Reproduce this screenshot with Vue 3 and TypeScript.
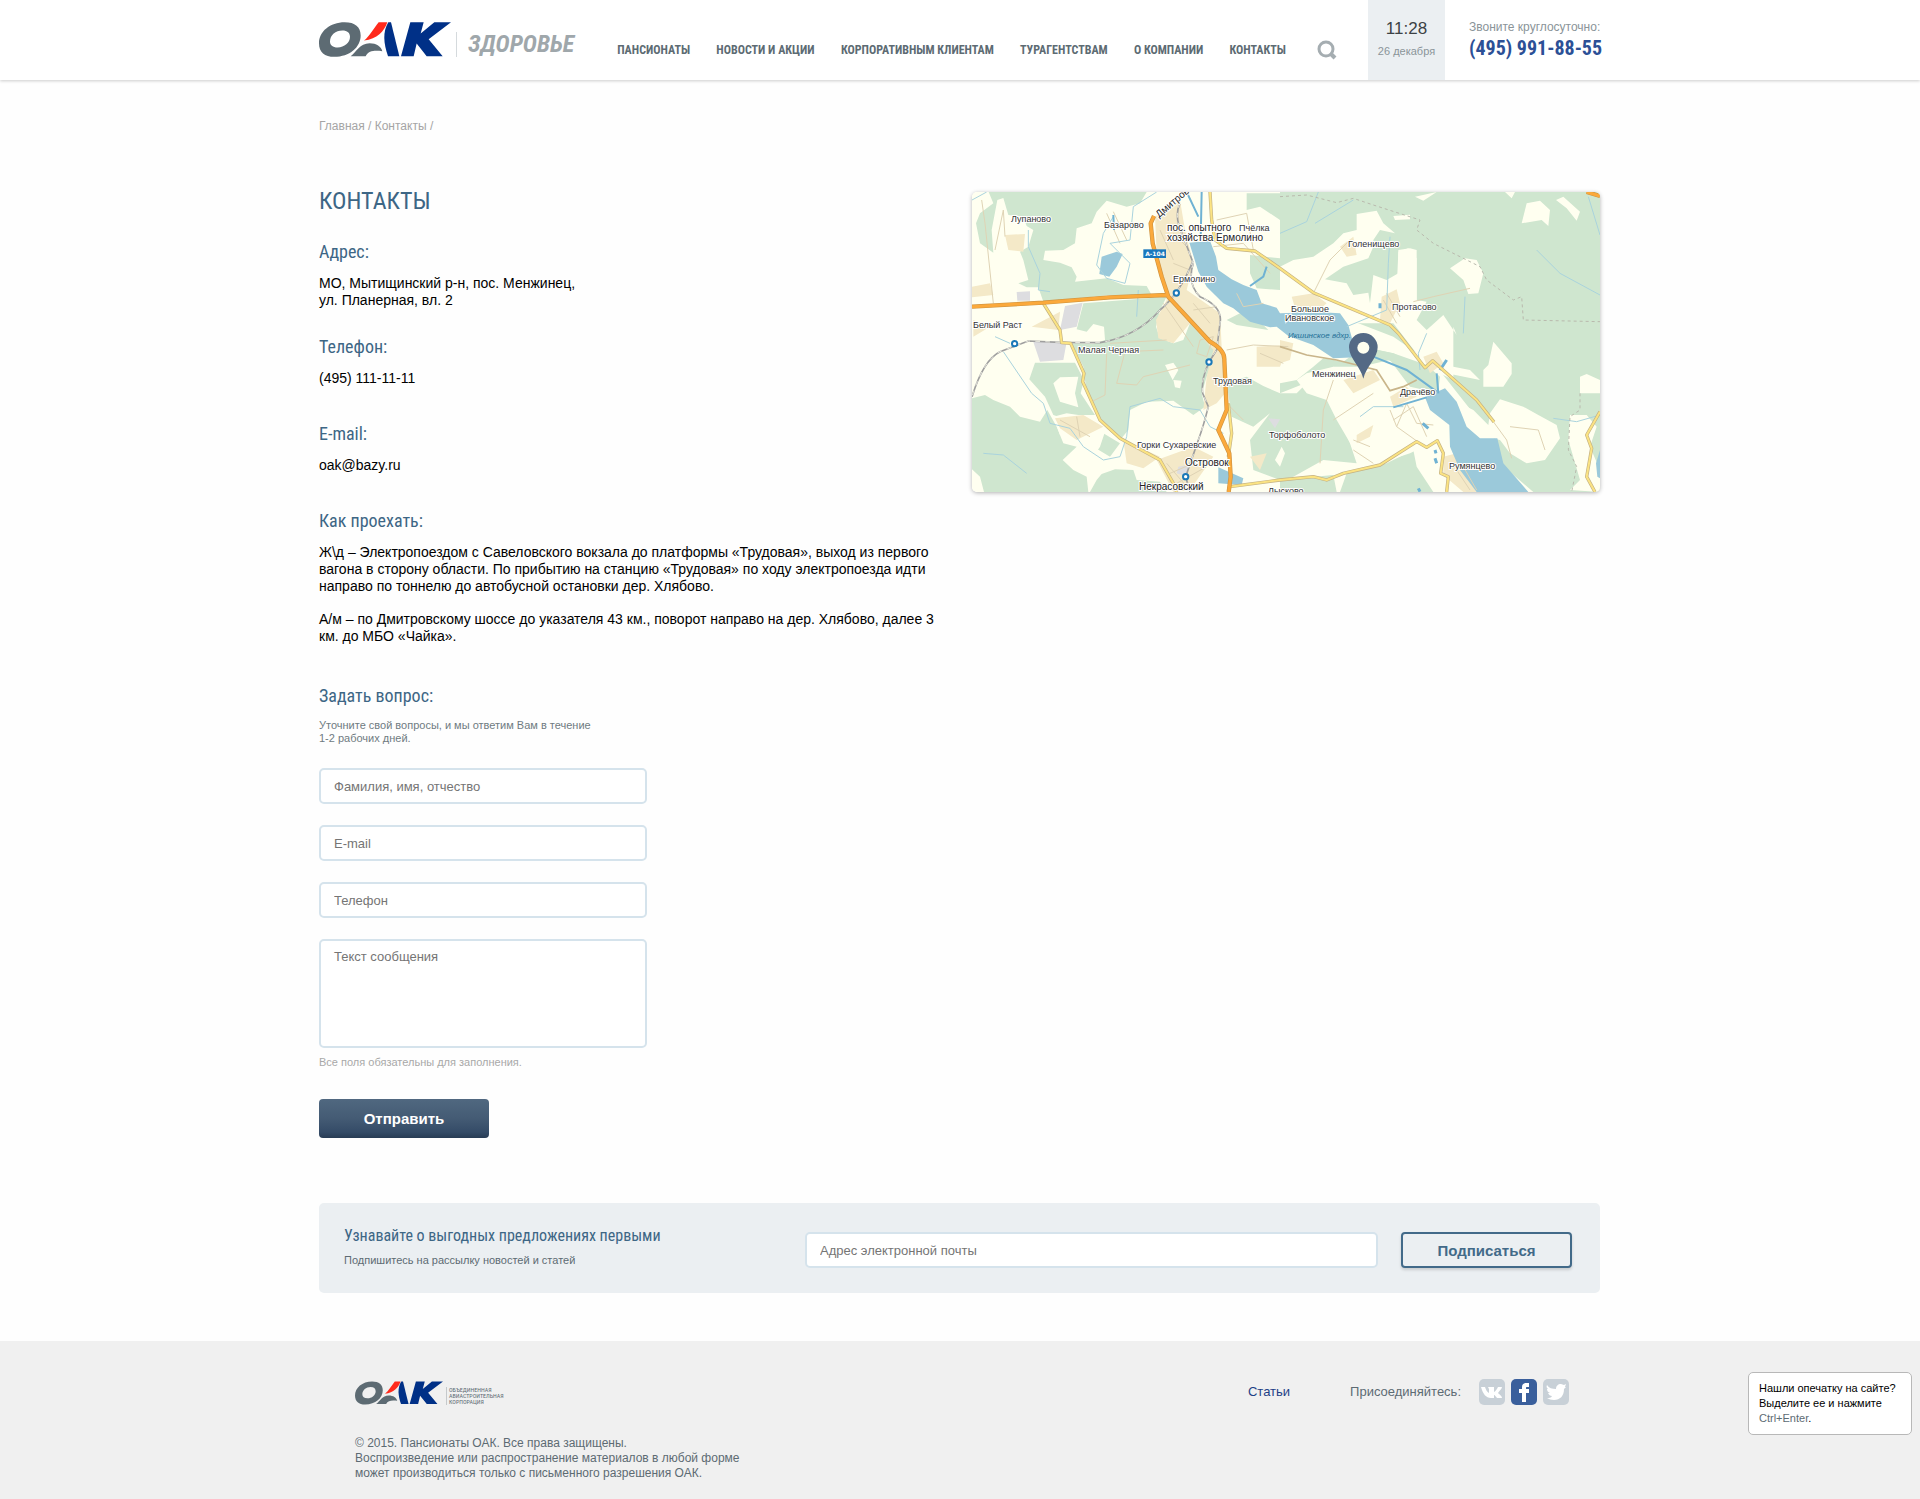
<script setup lang="ts">
import { ref } from 'vue'

interface MapLabel {
  text: string
  x: number
  y: number
  big?: boolean
}

const menu: string[] = [
  'Пансионаты',
  'Новости и акции',
  'Корпоративным клиентам',
  'Турагентствам',
  'О компании',
  'Контакты',
]

const labels: MapLabel[] = [
  { text: 'Лупаново', x: 39, y: 30 },
  { text: 'Базарово', x: 132, y: 36 },
  { text: 'пос. опытного', x: 195, y: 39, big: true },
  { text: 'хозяйства Ермолино', x: 195, y: 49, big: true },
  { text: 'Пчёлка', x: 267, y: 39 },
  { text: 'Ермолино', x: 201, y: 90 },
  { text: 'Белый Раст', x: 1, y: 136 },
  { text: 'Малая Черная', x: 106, y: 161 },
  { text: 'Трудовая', x: 241, y: 192 },
  { text: 'Горки Сухаревские', x: 165, y: 256 },
  { text: 'Островок', x: 213, y: 274, big: true },
  { text: 'Некрасовский', x: 167, y: 298, big: true },
  { text: 'Лысково', x: 296, y: 302 },
  { text: 'Торфоболото', x: 297, y: 246 },
  { text: 'Голенищево', x: 376, y: 55 },
  { text: 'Протасово', x: 420, y: 118 },
  { text: 'Большое', x: 319, y: 120 },
  { text: 'Ивановское', x: 313, y: 129 },
  { text: 'Менжинец', x: 340, y: 185 },
  { text: 'Драчёво', x: 428, y: 203 },
  { text: 'Румянцево', x: 477, y: 277 },
]

const stations: [number, number][] = [
  [649, 339],
  [164, 491],
  [747, 546],
  [677, 890],
]

const fullName = ref('')
const email = ref('')
const phone = ref('')
const message = ref('')
const subscription = ref('')
</script>

<template>
  <div class="page">
    <svg class="defs" width="0" height="0" aria-hidden="true">
      <symbol id="oak" viewBox="57 66 396 104">
        <path class="oak-grey" fill-rule="evenodd" d="M57 129C57 94 90 66 134 66c31 0 48 14 48 40 0 35-33 64-79 64-29 0-46-14-46-41zM90 124c0 11 8 18 23 18 20 0 37-14 37-32 0-12-8-19-23-19-20 0-37 14-37 33z" />
        <path class="oak-grey" d="M152 168c17-13 27-39 57-39 20 0 35 10 38 24-22-2-41-3-50 15z" />
        <path class="oak-red" d="M236 66h26c-10 28-30 50-70 55 16-12 30-38 44-55z" />
        <path class="oak-blue" d="M265 66h8l25 102h-34c-13-38-17-72 1-102z" />
        <path class="oak-blue" d="M331 66h40l-9 34 41-34h50l-67 51 42 51h-48l-30-38-9 38h-38z" />
      </symbol>
    </svg>

    <header class="header">
      <div class="container header-row">
        <a class="brand" href="#">
          <svg class="brand-logo" role="img" aria-label="ОАК"><use href="#oak" /></svg>
          <span class="brand-name">ЗДОРОВЬЕ</span>
        </a>
        <nav class="menu">
          <a v-for="item in menu" :key="item" href="#">{{ item }}</a>
        </nav>
        <button class="search" type="button" aria-label="Поиск">
          <svg width="20" height="20" viewBox="0 0 20 20" fill="none" stroke="#a5adb1">
            <circle cx="9" cy="9" r="7" stroke-width="3" />
            <path d="M14 14l4 4" stroke-width="4" />
          </svg>
        </button>
        <div class="clock">
          <span class="clock-time">11:28</span>
          <span class="clock-date">26 декабря</span>
        </div>
        <div class="call">
          <span class="call-note">Звоните круглосуточно:</span>
          <a class="call-number" href="tel:+74959918855">(495) 991-88-55</a>
        </div>
      </div>
    </header>

    <main class="container">
      <nav class="crumbs"><a href="#">Главная</a> / <a href="#">Контакты</a> /</nav>

      <div class="columns">
        <div class="info">
          <h1>КОНТАКТЫ</h1>
          <section class="address">
            <h2>Адрес:</h2>
            <p>МО, Мытищинский р-н, пос. Менжинец,<br />ул. Планерная, вл. 2</p>
          </section>
          <section>
            <h2>Телефон:</h2>
            <p>(495) 111-11-11</p>
          </section>
          <section>
            <h2>E-mail:</h2>
            <p>oak@bazy.ru</p>
          </section>
          <section class="route">
            <h2>Как проехать:</h2>
            <p>Ж\д – Электропоездом с Савеловского вокзала до платформы «Трудовая», выход из первого вагона в сторону области. По прибытию на станцию «Трудовая» по ходу электропоезда идти направо по тоннелю до автобусной остановки дер. Хлябово.</p>
            <p>А/м – по Дмитровскому шоссе до указателя 43 км., поворот направо на дер. Хлябово, далее 3 км. до МБО «Чайка».</p>
          </section>

          <form class="ask" @submit.prevent>
            <h2>Задать вопрос:</h2>
            <p class="ask-note">Уточните свой вопросы, и мы ответим Вам в течение<br />1-2 рабочих дней.</p>
            <input v-model="fullName" class="field" type="text" aria-label="Фамилия, имя, отчество" placeholder="Фамилия, имя, отчество" />
            <input v-model="email" class="field" type="email" aria-label="E-mail" placeholder="E-mail" />
            <input v-model="phone" class="field" type="tel" aria-label="Телефон" placeholder="Телефон" />
            <textarea v-model="message" class="field area" aria-label="Текст сообщения" placeholder="Текст сообщения"></textarea>
            <p class="required">Все поля обязательны для заполнения.</p>
            <button class="send" type="submit">Отправить</button>
          </form>
        </div>

        <svg class="map" viewBox="0 0 628 300" role="img" aria-label="Карта проезда">
          <svg width="628" height="300" viewBox="36 36 1884 900" preserveAspectRatio="none">
            <rect x="36" y="36" width="1884" height="900" fill="#fffff0" />
            <g fill="#cfe6cf">
              <path d="M86 36H560L540 70 500 80 440 62 410 95 395 130 350 145 345 190 310 210 255 212 250 240 300 248 335 262 350 290 345 305 440 295 490 315 560 318 575 345 450 345 250 365 235 322 200 322 175 310 205 300 190 240 180 215 205 200 220 150 200 138 190 110 145 105 130 54 112 60 95 150 100 218 60 190 48 130 60 100 100 70z" />
              <path d="M370 370L620 350 600 390 588 440 600 475 640 490 670 480 690 430 740 480 770 510 740 590 725 640 735 680 700 705 640 662 560 665 510 690 505 750 480 780 430 735 380 640 370 560 335 490 400 492 435 480 432 440 400 432 380 455 350 448z" />
              <path fill-rule="evenodd" d="M225 548H345L372 600 362 640 405 705 340 705 325 720 280 705 255 650 208 598zM280 610L300 592 355 590 345 640 355 682 300 665z" />
              <path d="M36 655L75 645 100 660 150 680 180 710 240 725 262 690 290 740 310 790 350 800 308 840 340 870 380 890 385 936H72L60 890 36 868z" />
              <path d="M425 882L465 868 520 870 530 900 600 905 620 936H390L410 900zM390 770L430 760 480 790 450 830 400 800z" />
              <path d="M800 610L860 590 910 618 960 640 1010 640 1040 610 1090 640 1110 660 1135 690 1140 720 1170 790 1190 850 1090 840 1000 890 960 900 880 870 870 780 930 700 880 740 815 710z" />
              <path d="M860 40H960V120L900 80 860 90zM870 225L960 235V330L890 325 870 280zM840 400L900 425 925 450 830 435 800 420z" />
              <path d="M960 36H1920V936H1720L1620 850 1600 770 1540 700 1430 560 1300 470 1170 420 1090 370 960 270z" />
              <path d="M960 610L1010 600 1060 560 1090 535 1150 545 1210 500 1300 520 1400 570 1440 640 1350 620 1290 540 1200 560 1120 560 1060 600 960 640zM1240 700L1270 690 1270 770 1240 760zM960 900L1120 885 1130 936H960zM1160 880L1280 850 1360 810 1370 860 1420 936H1140z" />
            </g>
            <g fill="#fffff0">
              <path d="M960 260L1000 240 1060 230 1120 190 1150 160 1190 150 1190 102 1250 92 1270 130 1305 160 1260 150 1240 180 1240 200 1225 235 1150 260 1095 298 1160 310 1180 345 1225 338 1230 370 1240 285 1280 300 1315 280 1315 210 1350 205 1370 210 1370 360 1400 365 1370 420 1400 450 1450 405 1490 465 1480 440 1480 600 1400 560 1300 430 1060 430 960 400z" />
              <path d="M1315 215L1345 205 1370 235 1370 360 1340 385 1310 330zM1470 265L1515 235 1550 240 1570 280 1555 340 1525 342 1510 300zM1685 130L1700 70 1740 62 1770 90 1765 138 1745 120zM1788 60L1810 50 1860 95 1850 122 1820 85zM1365 50L1430 36 1390 62zM1300 108L1350 104 1350 118 1305 120zM1635 36H1665L1655 55zM1600 485L1655 550 1655 582 1630 620 1570 620 1570 570 1585 555zM1860 590L1880 582 1920 600V640L1860 640zM1830 705L1880 705 1910 740 1890 800 1920 870V936L1830 930 1860 900 1825 780z" />
              <path d="M1590 700L1620 658 1690 680 1735 705 1790 735 1800 775 1755 840 1700 850 1650 820 1620 780 1580 770zM1460 650L1540 690 1590 740 1600 780 1540 770zM1560 600L1460 580 1440 540 1480 560 1530 570z" />
              <path d="M1010 600L1040 580 1120 560 1160 580 1170 620 1250 640 1300 600 1400 660 1440 700 1440 850 1390 800 1350 820 1260 850 1200 840 1130 720 1100 660 1040 640z" />
              <path d="M615 555L640 548 655 570 638 600zM640 600L665 602 660 625 645 622zM965 800L975 820 960 860 945 840zM280 710L320 700 400 712 440 740 420 800 400 830 360 760 300 765z" />
            </g>
            <path fill="#cfe6cf" d="M1200 500L1300 520 1400 555 1440 590 1435 630 1350 570 1240 520z" />
            <g fill="#f4e9c8">
              <path d="M585 110L660 60 675 150 700 250 680 330 780 400 785 500 795 640 770 670 730 690 740 590 760 510 690 430 640 490 595 475 588 420 620 360 590 220z" />
              <path d="M135 165L195 162 190 215 145 210zM36 320L90 310 100 345 36 352zM215 440L300 395 295 450zM40 420L90 440 40 470zM490 780L600 830 550 865 500 850zM590 840L700 800 760 830 690 930 640 936zM820 340L870 330 865 385 830 380zM890 500L985 495 960 560 890 560zM995 350L1060 340 1100 370 1070 395 1010 400zM1265 350L1310 328 1320 370 1290 430 1260 420zM1140 200L1180 170 1190 225 1160 230zM1150 600L1240 570 1260 600 1180 640zM1290 650L1340 620 1370 650 1300 680zM960 480L1000 490 990 540 960 550zM1190 765L1240 735 1230 770 1190 790zM1450 830L1490 820 1530 890 1560 936H1510L1450 885zM1390 530L1430 515 1450 550 1410 580zM870 830L920 820 900 870zM285 715L370 705 430 740 350 780 300 745z" />
            </g>
            <path fill="#dddde0" d="M170 336L210 334 210 362 172 362zM315 378L368 368 350 440 300 450zM220 486L320 486 310 540 240 545zM655 860L685 855 680 890 650 880zM925 715L960 718 945 745z" />
            <g fill="#9bc9da">
              <path d="M688 188L750 182 768 230 775 270 815 298 850 315 890 330 905 370 950 383 960 400 1070 396 1140 400 1165 435 1180 490 1240 510 1190 532 1120 535 1060 495 985 468 950 440 930 442 870 425 820 385 790 370 740 320 715 275z" />
              <path d="M425 230L470 215 488 222 470 260 448 290 418 282zM1395 652L1455 625 1490 665 1520 740 1560 775 1612 775 1630 850 1705 936H1550L1500 870 1470 800 1468 735 1410 690zM775 862L850 895 845 915 775 910zM1920 810L1908 850 1912 890 1920 895z" />
            </g>
            <g fill="none" stroke="#dfd3b4" stroke-width="3">
              <path d="M65 60L75 130 100 370M105 210L130 90 135 170M440 520L435 645 395 665M450 490L620 480M610 510L495 515 470 610 530 615 550 590 690 555M800 510L880 495 985 500M1060 340L1110 240 1170 180M1360 365L1420 350 1530 325M1120 600L1090 690 1080 850M1600 725L1640 780 1655 835M1650 740L1735 750 1755 810M1240 640L1120 720M1310 740L1340 670 1370 730 1420 735M1290 690L1310 740 1380 790M1300 720L1360 680 1400 770M640 160L680 200M640 250L690 270M700 370L750 430M760 200L850 190 930 280M770 120L860 100 880 210M830 340L850 380 910 370M900 520L970 550M720 480L760 470 740 530 710 520zM1490 870L1530 930M1510 860L1550 930M610 370L700 500M800 670L850 720M700 390L770 380M600 150L640 240M1180 780L1230 800M1180 810L1240 850" />
              <path d="M440 100L480 190M460 95L500 180M1270 360L1310 430M1280 340L1320 410M620 850L680 920M630 880L700 850M650 910L740 860M300 720L390 770M350 710L360 770" />
            </g>
            <g fill="none" stroke="#a9d3dd" stroke-width="3">
              <path d="M36 60L80 36M205 150L205 200 240 280 235 330 270 335M590 36L520 80 510 180 450 190 510 250 495 310 440 295 410 255 430 160 460 110M130 515L215 640 250 670 270 730 330 745 370 800 430 840 480 830 500 770 510 680 600 655 640 680 720 690 750 740 790 760M70 820L130 825 200 880M960 160L1040 125 1075 36M1065 130L1180 60M1290 170L1285 250 1280 390 1160 440M1730 210L1800 280 1920 345M1515 350L1510 460M1885 50L1920 165M1400 460L1375 520 1380 570M1780 715L1850 725 1920 705M1200 710L1240 680 1330 680M530 410L535 330M105 470L150 490" />
            </g>
            <g fill="none" stroke="#6fb2d3" stroke-width="6">
              <path d="M680 36L715 110M725 36L722 180M1180 520L1240 530 1340 570 1430 635M1300 682L1400 652M1430 580L1435 640M920 260L910 290 870 318M460 105L462 150" />
              <path d="M1388 730L1405 745M1440 570L1460 540M1425 810L1428 820M1425 835L1430 850M1375 925L1380 935M1260 370V385" stroke-width="9" />
            </g>
            <path d="M960 50L1040 45 1130 68 1180 55 1240 75 1380 120 1370 150 1420 190 1560 260 1580 300 1660 360 1685 350 1690 420 1920 425M1860 640L1860 690 1830 710 1825 810 1850 860 1835 936" fill="none" stroke="#b9b9ad" stroke-width="3" stroke-dasharray="9 9" />
            <g fill="none" stroke="#9f9f9f" stroke-width="5">
              <path d="M660 70Q640 110 670 170L698 245Q660 340 600 390 530 470 420 488L300 487 205 483 120 515Q70 540 36 650M700 250Q680 310 720 350 790 380 780 430L770 510Q720 580 728 640L745 680Q730 740 715 780L677 890 690 936" />
              <path d="M660 70Q640 110 670 170L698 245Q660 340 600 390 530 470 420 488L300 487 205 483 120 515Q70 540 36 650M700 250Q680 310 720 350 790 380 780 430L770 510Q720 580 728 640L745 680Q730 740 715 780L677 890 690 936" stroke="#e9e9e0" stroke-width="3" stroke-dasharray="14 16" />
            </g>
            <path d="M960 500L1040 525 1130 540 1250 570 1290 632 1330 620 1370 600" fill="none" stroke="#c9b58a" stroke-width="5" />
            <g fill="none" stroke-linejoin="round">
              <g v-for="layer in 2" :key="layer" :stroke="layer === 1 ? '#c4b283' : '#fbe382'" :stroke-width="layer === 1 ? 10 : 6">
                <path d="M250 370L300 450 305 488 332 490 372 580 368 605 420 720 480 775 600 840 640 910 650 936M750 36L755 120 765 180 800 205 885 213 960 265 1060 338 1290 435 1315 460 1395 563 1418 542 1550 660 1602 726M805 670L815 760 805 830M810 920L960 900 1060 890 1100 900 1150 880 1260 855 1370 785 1400 802 1432 782 1450 820 1442 880 1465 890 1460 936M1920 695L1880 765 1895 805 1880 890 1905 936" />
              </g>
              <g v-for="layer in 2" :key="layer + 2" :stroke="layer === 1 ? '#cf9440' : '#fba93b'" :stroke-width="layer === 1 ? 13 : 9">
                <path d="M36 380L250 368 450 352 622 345M582 108L572 130 578 190 605 290 625 350 750 485Q795 510 793 540L800 690 775 750 808 820 812 890 806 936M1880 36L1920 48" />
              </g>
            </g>
            <rect x="550" y="208" width="68" height="26" fill="#1a78bd" />
            <g fill="#fff" stroke="#1a78b8" stroke-width="6">
              <circle v-for="s in stations" :key="s[0]" :cx="s[0]" :cy="s[1]" r="8" />
            </g>
            <path fill="#546985" d="M1210 596C1202 560 1167 535 1167 502a43 43 0 0 1 86 0C1253 535 1218 560 1210 596z" />
            <circle cx="1210" cy="503" r="18" fill="#fffff0" />
          </svg>
          <g class="map-labels">
            <text v-for="l in labels" :key="l.text" :x="l.x" :y="l.y" :class="{ big: l.big }">{{ l.text }}</text>
            <text class="big" x="187" y="26" transform="rotate(-40 187 26)">Дмитров</text>
          </g>
          <text class="map-water" x="316" y="146">Икшинское вдхр.</text>
          <text class="map-road" x="183" y="64" text-anchor="middle">А-104</text>
        </svg>
      </div>

      <form class="subscribe" @submit.prevent>
        <div class="subscribe-text">
          <h3>Узнавайте о выгодных предложениях первыми</h3>
          <p>Подпишитесь на рассылку новостей и статей</p>
        </div>
        <input v-model="subscription" class="field" type="email" aria-label="Адрес электронной почты" placeholder="Адрес электронной почты" />
        <button type="submit">Подписаться</button>
      </form>
    </main>

    <footer class="footer">
      <div class="footer-inner">
        <div class="footer-left">
          <a class="footer-brand" href="#">
            <svg class="footer-logo" role="img" aria-label="ОАК"><use href="#oak" /></svg>
            <span>ОБЪЕДИНЕННАЯ<br />АВИАСТРОИТЕЛЬНАЯ<br />КОРПОРАЦИЯ</span>
          </a>
          <p>© 2015. Пансионаты ОАК. Все права защищены.<br />Воспроизведение или распространение материалов в любой форме<br />может производиться только с письменного разрешения ОАК.</p>
        </div>
        <div class="footer-right">
          <a class="articles" href="#">Статьи</a>
          <span class="join">Присоединяйтесь:</span>
          <a class="social vk" href="#" aria-label="ВКонтакте">
            <svg viewBox="0 0 26 26" fill="#fff"><path d="M2 8h4c1 3 2 5 4 6V10L9 8h6v5c1 0 3-3 4-5h4c0 2-3 4-4 6 1 1 4 3 4 5h-5c-1-1-2-3-3-3v3h-3C7 19 4 15 2 8z" /></svg>
          </a>
          <a class="social fb" href="#" aria-label="Facebook">
            <svg viewBox="0 0 26 26" fill="#fff"><path d="M11 23v-9H8v-4h3V8c0-3 2-4 4-4h3v4h-2c-1 0-1 0-1 2h3v4h-3v9z" /></svg>
          </a>
          <a class="social tw" href="#" aria-label="Twitter">
            <svg viewBox="0 0 26 26" fill="#fff"><path d="M4 6c2 3 5 4 9 4 0-3 2-5 5-5 1 0 2 1 3 1l2-1-1 3 1 0-2 2c0 7-4 11-10 11-3 0-5-1-7-2 2 0 4 0 5-2-2 0-3-1-4-3h2c-2-1-3-2-3-4h1C4 9 3 8 4 6z" /></svg>
          </a>
        </div>
      </div>
      <aside class="typo">Нашли опечатку на сайте? Выделите ее и нажмите <span>Ctrl+Enter</span>.</aside>
    </footer>
  </div>
</template>

<style>
body {
  background: #fefefe;
}
</style>

<style scoped>
* {
  box-sizing: border-box;
}
.page {
  --narrow: "Liberation Sans Narrow", "Arial Narrow", "Roboto Condensed", "Liberation Sans", sans-serif;
  font: 14px/17px "Liberation Sans", Arial, sans-serif;
  color: #000;
}
.page a {
  color: inherit;
  text-decoration: none;
}
h1, h2, h3, p {
  margin: 0;
}
button, input, textarea {
  font-family: inherit;
  margin: 0;
}
.defs {
  position: absolute;
}
.oak-grey { fill: #5d6b73; }
.oak-red { fill: #ff2a1c; }
.oak-blue { fill: #003087; }
.container {
  max-width: 1282px;
  margin: 0 auto;
  padding-right: 1px;
}
.header {
  background: #fff;
  box-shadow: 0 1px 3px rgba(0, 0, 0, 0.2);
}
.header-row {
  display: flex;
  height: 80px;
}
.brand {
  display: flex;
  align-items: flex-start;
  padding-top: 22px;
}
.brand-logo {
  width: 132px;
  height: 35px;
}
.page .brand-name {
  margin: 10px 0 0 5px;
  padding-left: 11px;
  border-left: 1px solid #d5dadd;
  font: italic bold 24px/25px var(--narrow);
  color: #9fa7ab;
}
.menu {
  flex: 1;
  display: flex;
  justify-content: space-between;
  margin: 42px 31px 0 43px;
  font: bold 12px/17px var(--narrow);
  text-transform: uppercase;
  white-space: nowrap;
}
.page .menu a {
  color: #5d6b73;
}
.search {
  align-self: flex-start;
  margin: 40px 31px 0 0;
  padding: 0;
  border: 0;
  background: none;
  height: 20px;
}
.clock {
  width: 77px;
  padding-top: 20px;
  background: #ebeff2;
  text-align: center;
}
.clock span, .call span, .call a {
  display: block;
}
.clock-time {
  font-size: 17px;
  line-height: 18px;
  color: #3c4245;
}
.clock-date {
  margin-top: 6px;
  font-size: 11px;
  line-height: 14px;
  color: #8a9499;
}
.call {
  width: 155px;
  padding: 19px 0 0 24px;
  white-space: nowrap;
}
.call-note {
  font-size: 12px;
  line-height: 16px;
  color: #8a9499;
}
.page .call-number {
  font: bold 20px/26px var(--narrow);
  color: #2c5096;
}
.crumbs {
  padding-top: 38px;
  font-size: 12px;
  line-height: 16px;
  color: #a5a5a5;
}
.columns {
  display: grid;
  grid-template-columns: 1fr 628px;
  gap: 32px;
  align-items: start;
  margin-top: 52px;
}
h1 {
  margin: 0 0 24px;
  font: 24px/30px var(--narrow);
  color: #3d6685;
}
.map {
  display: block;
  width: 100%;
  margin-top: 6px;
  border-radius: 5px;
  box-shadow: 0 1px 4px rgba(0, 0, 0, 0.3);
}
h2 {
  margin-bottom: 11px;
  font: 18px/24px var(--narrow);
  color: #3d6685;
}
section {
  margin-bottom: 35px;
}
.address {
  margin-bottom: 26px;
}
.route {
  margin-bottom: 39px;
}
section p + p {
  margin-top: 16px;
}
.ask {
  display: flex;
  flex-direction: column;
  align-items: flex-start;
}
.ask-note {
  margin-bottom: 23px;
  font-size: 11px;
  line-height: 13px;
  color: #6f7b81;
}
.field {
  display: block;
  width: 328px;
  height: 36px;
  padding: 0 13px;
  border: 2px solid #d5e3ec;
  border-radius: 5px;
  background: #fff;
  font-size: 13px;
  line-height: 16px;
}
.field::placeholder {
  color: #757575;
  opacity: 1;
}
.ask .field {
  margin-bottom: 21px;
}
.ask .area {
  height: 109px;
  margin-bottom: 8px;
  padding-top: 8px;
  resize: none;
}
.required {
  font-size: 11px;
  line-height: 13px;
  color: #a8a8a8;
}
.send {
  width: 170px;
  height: 39px;
  margin-top: 30px;
  border: 0;
  border-radius: 4px;
  background: linear-gradient(#506880, #445b74 50%, #344b67 85%, #283c54);
  color: #fff;
  font-size: 15px;
  font-weight: bold;
}
.map-labels {
  font-size: 9px;
  fill: #333;
  stroke: #fff;
  stroke-width: 2px;
  paint-order: stroke;
}
.map-labels .big {
  font-size: 10px;
  fill: #222;
}
.map-water {
  font: italic 8px "Liberation Sans", sans-serif;
  fill: #1f6f96;
}
.map-road {
  font: bold 6px "DejaVu Sans", sans-serif;
  fill: #fff;
}
.subscribe {
  display: flex;
  align-items: flex-start;
  min-height: 90px;
  margin: 65px 0 48px;
  padding: 21px 28px 0 25px;
  border-radius: 5px;
  background: #ebeff2;
}
.subscribe-text {
  width: 461px;
}
h3 {
  font: 16px/24px var(--narrow);
  color: #3d6685;
}
.subscribe p {
  margin-top: 5px;
  font-size: 11px;
  line-height: 14px;
  color: #5d6b73;
}
.subscribe .field {
  flex: 1;
  margin: 8px 23px 0 0;
}
.subscribe button {
  width: 171px;
  height: 36px;
  margin-top: 8px;
  border: 2px solid #426a89;
  border-radius: 4px;
  background: #ebeff2;
  box-shadow: 0 2px 3px rgba(0, 0, 0, 0.15);
  color: #426a89;
  font-size: 15px;
  font-weight: bold;
}
.footer {
  position: relative;
  min-height: 158px;
  background: #f0f0f0;
  color: #5d6b73;
}
.footer-inner {
  display: flex;
  justify-content: space-between;
  max-width: 1280px;
  margin: 0 auto;
  padding: 38px 31px 0 35px;
}
.footer-brand {
  display: flex;
  align-items: flex-end;
  padding-top: 2px;
}
.footer-logo {
  width: 88px;
  height: 24px;
}
.footer-brand span {
  margin-left: 3px;
  padding-left: 2px;
  border-left: 1px solid #c5c9cb;
  font: 6px/6px var(--narrow);
}
.footer p {
  margin-top: 31px;
  font-size: 12px;
  line-height: 15px;
}
.footer-right {
  display: flex;
  height: 26px;
  line-height: 26px;
  font-size: 13px;
}
.page .articles {
  margin-right: 60px;
  color: #1d3f86;
}
.join {
  margin-right: 18px;
}
.social {
  width: 26px;
  height: 26px;
  margin-left: 6px;
  border-radius: 5px;
  background: #c8d0d7;
}
.join + .social {
  margin-left: 0;
}
.social svg {
  display: block;
}
.social.fb {
  background: #3a5f9c;
}
.typo {
  position: absolute;
  top: 31px;
  right: 8px;
  width: 164px;
  padding: 8px 10px;
  border: 1px solid #b8b8b8;
  border-radius: 5px;
  background: #fff;
  font-size: 11px;
  line-height: 15px;
  color: #000;
}
.typo span {
  color: #5d6b73;
}
</style>
